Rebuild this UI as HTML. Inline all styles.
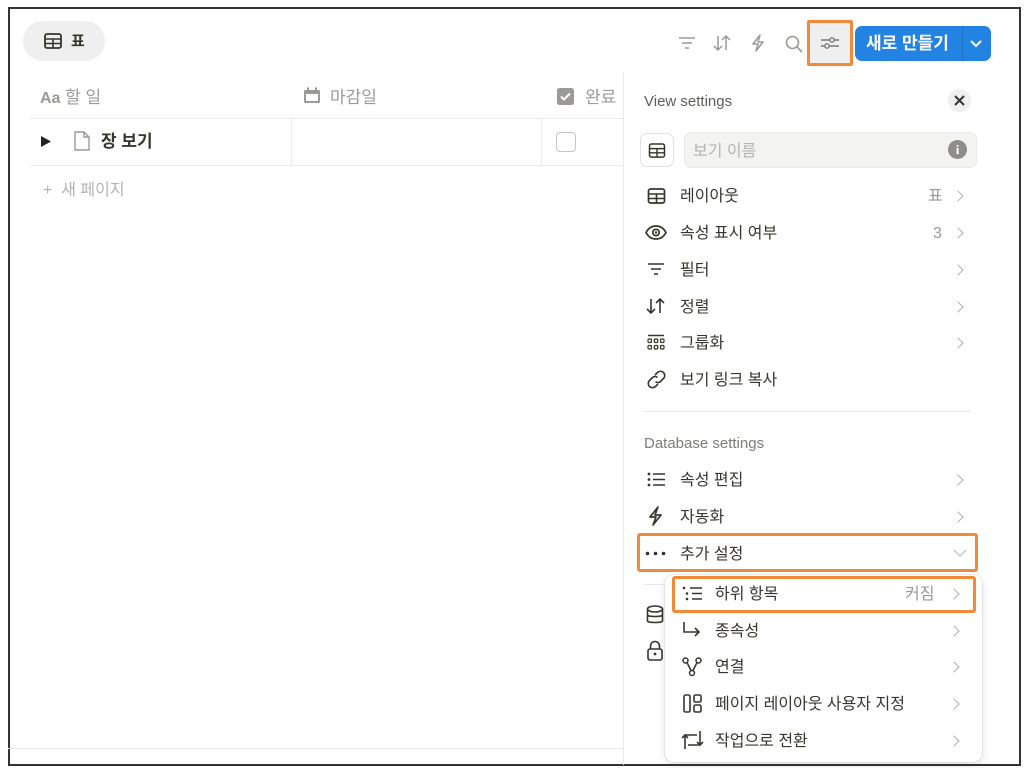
<!DOCTYPE html>
<html><head><meta charset="utf-8"><style>
*{box-sizing:border-box;margin:0;padding:0}
body{width:1027px;height:768px;background:#fff;position:relative;overflow:hidden;font-family:"Liberation Sans","Noto Sans CJK KR",sans-serif;color:#37352f}
.a{position:absolute}
.frame{left:8px;top:7px;width:1013px;height:759px;border:2px solid #333}
.t{position:absolute;font-size:16px;line-height:22px;white-space:nowrap}
.ic{position:absolute}
.chev{position:absolute;width:8px;height:8px;border-right:1.5px solid #b0afab;border-top:1.5px solid #b0afab;transform:rotate(45deg)}
</style></head><body>
<div class="a frame"></div>
<div class="a" style="left:23px;top:21px;width:82px;height:40px;border-radius:20px;background:#efefef"></div>
<svg class="ic" style="left:44px;top:33px" width="18" height="16" viewBox="0 0 18 16"><rect x="1" y="1" width="16" height="14" rx="2" fill="none" stroke="#37352f" stroke-width="1.8"/><path d="M1 6H17M1 10.5H17M9 6V15" stroke="#37352f" stroke-width="1.6"/></svg>
<div class="t" style="left:71px;top:31px;font-weight:bold;font-size:15px">표</div>
<div class="t" style="left:40px;top:87px;color:#9b9a97;font-size:17px"><span style="font-size:16px;font-weight:bold">Aa</span> 할 일</div>
<svg class="ic" style="left:303px;top:87px" width="18" height="18" viewBox="0 0 18 18"><rect x="1" y="3" width="16" height="13" rx="1.5" fill="#9b9a97"/><rect x="3" y="7" width="12" height="7" fill="#fff"/><rect x="4" y="0.5" width="2" height="4" fill="#9b9a97"/><rect x="12" y="0.5" width="2" height="4" fill="#9b9a97"/></svg>
<div class="t" style="left:330px;top:87px;color:#9b9a97;font-size:17px">마감일</div>
<svg class="ic" style="left:557px;top:88px" width="17" height="17" viewBox="0 0 17 17"><rect width="17" height="17" rx="2.5" fill="#9b9a97"/><path d="M4 8.5L7 11.5L13 5.5" stroke="#fff" stroke-width="2" fill="none"/></svg>
<div class="t" style="left:585px;top:87px;color:#9b9a97;font-size:17px">완료</div>
<div class="a" style="left:30px;top:118px;width:593px;height:1px;background:#e9e9e7"></div>
<div class="a" style="left:30px;top:165px;width:593px;height:1px;background:#e9e9e7"></div>
<div class="a" style="left:291px;top:118px;width:1px;height:47px;background:#e9e9e7"></div>
<div class="a" style="left:541px;top:118px;width:1px;height:47px;background:#e9e9e7"></div>
<svg class="ic" style="left:40px;top:135px" width="12" height="13"><path d="M1 1L11 6.5L1 12Z" fill="#222"/></svg>
<svg class="ic" style="left:74px;top:131px" width="16" height="20" viewBox="0 0 16 20"><path d="M1 1H10L15 6V19H1Z M10 1V6H15" fill="none" stroke="#9b9a97" stroke-width="1.4"/></svg>
<div class="t" style="left:101px;top:131px;font-weight:bold;font-size:17px">장 보기</div>
<div class="a" style="left:556px;top:132px;width:20px;height:20px;border:1.5px solid #c7c6c3;border-radius:4px"></div>
<div class="t" style="left:43px;top:180px;color:#b4b3b0;font-size:16px">+ &nbsp;새 페이지</div>
<div class="a" style="left:8px;top:748px;width:615px;height:1px;background:#e9e9e7"></div>
<svg class="ic" style="left:678px;top:36px" width="18" height="14"><path d="M1 2H17M4 7H14M7 12H11" stroke="#9b9a97" stroke-width="1.5"/></svg>
<svg class="ic" style="left:713px;top:34px" width="18" height="18"><path d="M5 2V16M1 12L5 16L9 12M13 16V2M9 6L13 2L17 6" stroke="#9b9a97" stroke-width="1.5" fill="none"/></svg>
<svg class="ic" style="left:751px;top:34px" width="14" height="18"><path d="M9 1L2 10H7L5 17L12 8H7Z" stroke="#9b9a97" stroke-width="1.5" fill="none" stroke-linejoin="round"/></svg>
<svg class="ic" style="left:785px;top:35px" width="18" height="18"><circle cx="7.5" cy="7.5" r="6" stroke="#9b9a97" stroke-width="1.6" fill="none"/><path d="M12 12L17 17" stroke="#9b9a97" stroke-width="1.6"/></svg>
<div class="a" style="left:807px;top:20px;width:46px;height:46px;border:3px solid #f28a3a;background:#efefef;border-radius:2px"></div>
<svg class="ic" style="left:820px;top:34px" width="20" height="18"><path d="M1 6H19M1 12H19" stroke="#7a7975" stroke-width="1.4"/><circle cx="12" cy="6" r="2.2" fill="#efefef" stroke="#7a7975" stroke-width="1.4"/><circle cx="7" cy="12" r="2.2" fill="#efefef" stroke="#7a7975" stroke-width="1.4"/></svg>
<div class="a" style="left:855px;top:26px;width:136px;height:35px;background:#2383e2;border-radius:7px"></div>
<div class="a" style="left:962px;top:26px;width:1px;height:35px;background:#1b6fc4"></div>
<div class="t" style="left:866px;top:33px;color:#fff;font-weight:bold;font-size:17px">새로 만들기</div>
<svg class="ic" style="left:969px;top:39px" width="14" height="10"><path d="M2 2L7 7L12 2" stroke="#fff" stroke-width="2" fill="none"/></svg>
<div class="a" style="left:623px;top:72px;width:1px;height:693px;background:#e9e9e7"></div>
<div class="t" style="left:644px;top:91px;font-size:15px;color:#5f5e5b">View settings</div>
<div class="a" style="left:948px;top:89px;width:23px;height:23px;border-radius:50%;background:#efefef"></div>
<svg class="ic" style="left:954px;top:95px" width="11" height="11"><path d="M1 1L10 10M10 1L1 10" stroke="#37352f" stroke-width="2"/></svg>
<div class="a" style="left:640px;top:133px;width:34px;height:34px;border:1px solid #e3e2e0;border-radius:7px"></div>
<svg class="ic" style="left:648px;top:143px" width="18" height="15" viewBox="0 0 18 16"><rect x="1" y="1" width="16" height="14" rx="2" fill="none" stroke="#37352f" stroke-width="1.6"/><path d="M1 6H17M1 10.5H17M9 6V15" stroke="#37352f" stroke-width="1.5"/></svg>
<div class="a" style="left:684px;top:132px;width:293px;height:36px;background:#f3f3f2;border:1px solid #e9e9e7;border-radius:7px"></div>
<div class="t" style="left:693px;top:141px;color:#b4b3b0;font-size:16px">보기 이름</div>
<div class="a" style="left:948px;top:140px;width:19px;height:19px;border-radius:50%;background:#8e8d8a;color:#fff;font-size:13px;font-weight:bold;text-align:center;line-height:19px;font-family:'Liberation Serif',serif">i</div>

<svg class="ic" style="left:647px;top:188px" width="19" height="16" viewBox="0 0 18 16"><rect x="1" y="1" width="16" height="14" rx="2" fill="none" stroke="#37352f" stroke-width="1.7"/><path d="M1 6H17M1 10.5H17M9 6V15" stroke="#37352f" stroke-width="1.6"/></svg>
<div class="t" style="left:680px;top:186px">레이아웃</div><div class="t" style="left:928px;top:186px;color:#9b9a97">표</div><div class="chev" style="left:954px;top:192px"></div>

<svg class="ic" style="left:645px;top:225px" width="22" height="15"><path d="M1 7.5C4 2 8 1 11 1S18 2 21 7.5C18 13 14 14 11 14S4 13 1 7.5Z" fill="none" stroke="#37352f" stroke-width="1.7"/><circle cx="11" cy="7.5" r="3.2" fill="none" stroke="#37352f" stroke-width="1.7"/><circle cx="11" cy="7.5" r="1.2" fill="#37352f"/></svg>
<div class="t" style="left:680px;top:223px">속성 표시 여부</div><div class="t" style="left:933px;top:223px;color:#9b9a97">3</div><div class="chev" style="left:954px;top:229px"></div>

<svg class="ic" style="left:647px;top:262px" width="18" height="14"><path d="M1 2H17M4 7H14M7 12H11" stroke="#37352f" stroke-width="1.6"/></svg>
<div class="t" style="left:680px;top:260px">필터</div><div class="chev" style="left:954px;top:266px"></div>

<svg class="ic" style="left:646px;top:297px" width="20" height="18"><path d="M5 2V16M1 12L5 16L9 12M14 16V2M10 6L14 2L18 6" stroke="#37352f" stroke-width="1.6" fill="none"/></svg>
<div class="t" style="left:680px;top:297px">정렬</div><div class="chev" style="left:954px;top:303px"></div>

<svg class="ic" style="left:647px;top:334px" width="18" height="17"><path d="M1 1.5H17" stroke="#37352f" stroke-width="1.5"/><g fill="none" stroke="#37352f" stroke-width="1.2"><rect x="1" y="5" width="3.5" height="3.5" rx="1"/><rect x="7.3" y="5" width="3.5" height="3.5" rx="1"/><rect x="13.5" y="5" width="3.5" height="3.5" rx="1"/><rect x="1" y="11.5" width="3.5" height="3.5" rx="1"/><rect x="7.3" y="11.5" width="3.5" height="3.5" rx="1"/><rect x="13.5" y="11.5" width="3.5" height="3.5" rx="1"/></g></svg>
<div class="t" style="left:680px;top:333px">그룹화</div><div class="chev" style="left:954px;top:339px"></div>

<svg class="ic" style="left:647px;top:370px" width="19" height="19"><g fill="none" stroke="#37352f" stroke-width="1.6"><path d="M8 5L10.5 2.5A3.5 3.5 0 0 1 16.5 8.5L13.5 11.5A3.5 3.5 0 0 1 8.5 11.5"/><path d="M11 14L8.5 16.5A3.5 3.5 0 0 1 2.5 10.5L5.5 7.5A3.5 3.5 0 0 1 10.5 7.5"/></g></svg>
<div class="t" style="left:680px;top:370px">보기 링크 복사</div>

<div class="a" style="left:644px;top:411px;width:327px;height:1px;background:#e9e9e7"></div>
<div class="t" style="left:644px;top:433px;font-size:15px;color:#7d7c78">Database settings</div>

<svg class="ic" style="left:647px;top:472px" width="19" height="15"><g fill="#37352f"><circle cx="2" cy="2" r="1.4"/><circle cx="2" cy="7.5" r="1.4"/><circle cx="2" cy="13" r="1.4"/></g><path d="M6 2H18M6 7.5H18M6 13H18" stroke="#37352f" stroke-width="1.6"/></svg>
<div class="t" style="left:680px;top:470px">속성 편집</div><div class="chev" style="left:954px;top:476px"></div>

<svg class="ic" style="left:648px;top:506px" width="15" height="20"><path d="M10 1L2 11H8L5 19L13 9H7Z" stroke="#37352f" stroke-width="1.7" fill="none" stroke-linejoin="round"/></svg>
<div class="t" style="left:680px;top:507px">자동화</div><div class="chev" style="left:954px;top:513px"></div>

<div class="a" style="left:637px;top:533px;width:341px;height:39px;border:3px solid #f28a3a;border-radius:3px"></div>
<svg class="ic" style="left:645px;top:551px" width="22" height="5"><g fill="#37352f"><circle cx="2.5" cy="2.5" r="1.8"/><circle cx="10.5" cy="2.5" r="1.8"/><circle cx="18.5" cy="2.5" r="1.8"/></g></svg>
<div class="t" style="left:680px;top:544px">추가 설정</div>
<svg class="ic" style="left:953px;top:549px" width="14" height="9"><path d="M1 1L7 7L13 1" stroke="#c7c6c3" stroke-width="1.5" fill="none"/></svg>

<div class="a" style="left:644px;top:584px;width:327px;height:1px;background:#e9e9e7"></div>
<svg class="ic" style="left:646px;top:605px" width="18" height="20"><g fill="none" stroke="#37352f" stroke-width="1.6"><ellipse cx="9" cy="4" rx="7.5" ry="3"/><path d="M1.5 4V16C1.5 18 16.5 18 16.5 16V4M1.5 10C1.5 12 16.5 12 16.5 10"/></g></svg>
<svg class="ic" style="left:647px;top:640px" width="16" height="21"><g fill="none" stroke="#37352f" stroke-width="1.6"><path d="M3.5 9V6A4.5 4.5 0 0 1 12.5 6V9"/><rect x="1" y="9" width="14" height="11" rx="2"/></g><circle cx="8" cy="14" r="1.4" fill="#37352f"/></svg>

<div class="a" style="left:665px;top:575px;width:317px;height:187px;background:#fff;border-radius:9px;box-shadow:0 0 0 1px rgba(15,15,15,.06),0 3px 10px rgba(15,15,15,.12)"></div>
<div class="a" style="left:672px;top:576px;width:304px;height:37px;border:3px solid #f28a3a;border-radius:3px"></div>
<svg class="ic" style="left:682px;top:586px" width="21" height="15"><g fill="#37352f"><circle cx="2" cy="2" r="1.3"/><circle cx="5" cy="7.5" r="1.3"/><circle cx="5" cy="13" r="1.3"/></g><path d="M8 2H20M10 7.5H20M10 13H20" stroke="#37352f" stroke-width="1.5"/></svg>
<div class="t" style="left:715px;top:584px">하위 항목</div><div class="t" style="left:905px;top:584px;color:#9b9a97">커짐</div><div class="chev" style="left:950px;top:590px"></div>

<svg class="ic" style="left:682px;top:621px" width="20" height="18"><path d="M2 1V11H17M13 7L17 11L13 15" stroke="#37352f" stroke-width="1.6" fill="none"/></svg>
<div class="t" style="left:715px;top:621px">종속성</div><div class="chev" style="left:950px;top:627px"></div>

<svg class="ic" style="left:682px;top:657px" width="20" height="20"><g fill="none" stroke="#37352f" stroke-width="1.5"><circle cx="3.5" cy="3.5" r="2.5"/><circle cx="16.5" cy="3.5" r="2.5"/><circle cx="10" cy="16" r="2.5"/><path d="M5 5.5L9 13.5M15 5.5L11 13.5"/></g></svg>
<div class="t" style="left:715px;top:657px">연결</div><div class="chev" style="left:950px;top:663px"></div>

<svg class="ic" style="left:683px;top:694px" width="19" height="19"><g fill="none" stroke="#37352f" stroke-width="1.6"><rect x="1" y="1" width="6" height="17" rx="1.5"/><rect x="11" y="1" width="7" height="7" rx="1.5"/><rect x="11" y="11" width="7" height="7" rx="1.5"/></g></svg>
<div class="t" style="left:715px;top:694px">페이지 레이아웃 사용자 지정</div><div class="chev" style="left:950px;top:700px"></div>

<svg class="ic" style="left:680px;top:730px" width="24" height="20"><g fill="none" stroke="#37352f" stroke-width="1.6"><path d="M5 19V5H17M2 8L5 5L8 8"/><path d="M20 1V15H8M23 12L20 15L17 12"/></g></svg>
<div class="t" style="left:715px;top:731px">작업으로 전환</div><div class="chev" style="left:950px;top:737px"></div>
</body></html>
